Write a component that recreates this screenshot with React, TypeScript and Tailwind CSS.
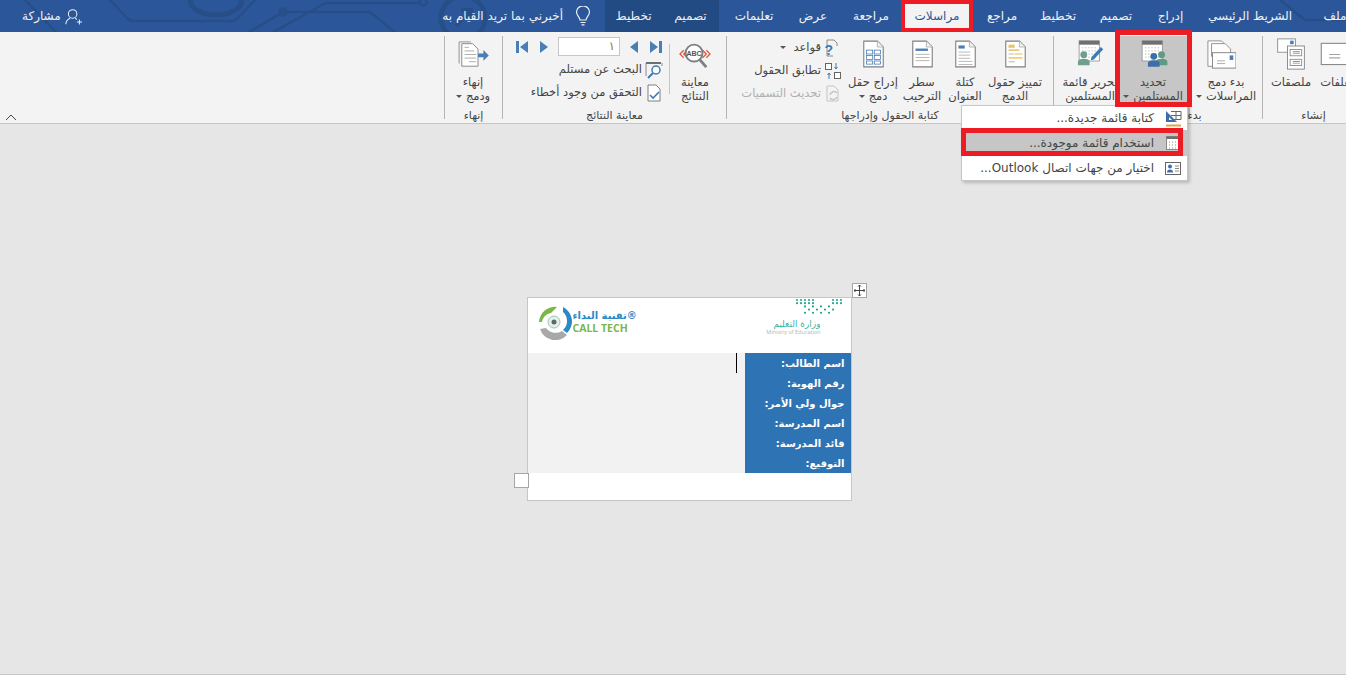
import type { ReactNode } from 'react';

const TABS = [
  { label: 'ملف', w: 'w-[50px] -mr-[14px]' },
  { label: 'الشريط الرئيسي', w: 'w-[120px]' },
  { label: 'إدراج', w: 'w-[39px]' },
  { label: 'تصميم', w: 'w-[70px]' },
  { label: 'تخطيط', w: 'w-[46px]' },
  { label: 'مراجع', w: 'w-[66px]' },
];

const TABS_AFTER = [
  { label: 'مراجعة', w: 'w-[68px]' },
  { label: 'عرض', w: 'w-[48px]' },
  { label: 'تعليمات', w: 'w-[70px]' },
];

const FIELDS = ['اسم الطالب:', 'رقم الهوية:', 'جوال ولي الأمر:', 'اسم المدرسة:', 'قائد المدرسة:', 'التوقيع:'];

function Page({ children }: { children?: ReactNode }) {
  return (
    <svg width="25" height="28" viewBox="0 0 32 36" fill="none">
      <path d="M3.5 1.5H21L28.5 9V34.5H3.5Z" fill="#fff" stroke="#7f7f7f" strokeWidth="1.4" />
      <path d="M21 1.5V9H28.5" fill="#f2f2f2" stroke="#a6a6a6" />
      {children}
    </svg>
  );
}

function Calendar({ children }: { children?: ReactNode }) {
  return (
    <svg width="30" height="28" viewBox="0 0 38 36" fill="none">
      <rect x="5" y="1" width="26" height="26" fill="#fff" stroke="#8a8a8a" />
      <rect x="5" y="1" width="26" height="5" fill="#6f6f6f" />
      <path d="M9 10h19M9 14h19M9 18h19M9 22h19" stroke="#9a9a9a" strokeDasharray="1.5 2.5" />
      {children}
    </svg>
  );
}

function Person({ x, y, color }: { x: number; y: number; color: string }) {
  return (
    <g fill={color}>
      <circle cx={x} cy={y} r="4.4" />
      <path d={`M${x - 7.5} ${y + 13.5}v-4.5c0-2.5 3-4 7.5-4s7.5 1.5 7.5 4v4.5z`} />
    </g>
  );
}

function Lines({ y, x1 = 8, x2 = 24, step = 4, n = 3, color = '#a6a6a6' }: { y: number; x1?: number; x2?: number; step?: number; n?: number; color?: string }) {
  return (
    <>
      {Array.from({ length: n }).map((_, i) => (
        <path key={i} d={`M${x1} ${y + i * step + 0.5}H${x2}`} stroke={color} />
      ))}
    </>
  );
}

function Big({ w, a, b, caret, icon }: { w: string; a: string; b: string; caret?: boolean; icon: ReactNode }) {
  return (
    <div className={`${w} flex flex-col items-center shrink-0`}>
      <div className="h-9 flex items-center justify-center">{icon}</div>
      <span className="mt-[3px] leading-[14px] whitespace-nowrap">{a}</span>
      <span className="leading-[14px] whitespace-nowrap flex items-center gap-1">
        {b}
        {caret && <i className="w-0 h-0 border-x-[3px] border-x-transparent border-t-[3px] border-t-[#555]" />}
      </span>
    </div>
  );
}

function Group({ label, className, inner = '', children }: { label: string; className: string; inner?: string; children: ReactNode }) {
  return (
    <div className={`${className} h-[83px] mt-1 border-l border-[#b5b5b5] flex flex-col shrink-0`}>
      <div className={`${inner} h-[70px] flex`}>{children}</div>
      <div className="mt-auto -mb-[4px] h-[13px] flex items-center justify-center text-[11px] whitespace-nowrap">{label}</div>
    </div>
  );
}

function Row({ icon, muted, children }: { icon: ReactNode; muted?: boolean; children: ReactNode }) {
  return (
    <div className={`h-[23px] flex items-center gap-[3px] whitespace-nowrap ${muted ? 'text-[#b0b0b0]' : ''}`}>
      <span className="w-[18px] h-[18px] flex items-center justify-center shrink-0">{icon}</span>
      {children}
    </div>
  );
}

function NavIcon({ d }: { d: string }) {
  return (
    <svg width="14" height="14" viewBox="0 0 14 14">
      <path d={d} fill="#4a7fb5" />
    </svg>
  );
}

function CircuitArt() {
  return (
    <svg className="absolute inset-0 pointer-events-none" width="1346" height="32" fill="none" stroke="#274e87" strokeWidth="2.5">
      <path d="M25 0 58 34M110 0l17 18q3 3 7 3h96q5 0 8-3l17-18" />
      <path d="M190 0a26 15 0 0 0 52 0" strokeWidth="5" />
      <path d="M246 34l37-22h87l27 22M283 12" />
      <circle cx="283" cy="12" r="3.5" />
      <path d="M270 34 320 6q4-3 9-3h91" />
      <circle cx="423" cy="2" r="3.5" />
      <circle cx="463" cy="18" r="22" strokeWidth="5" />
      <path d="M456 26 470 11M461 10h10v10" strokeWidth="4" />
      <path d="M1280 0l25 20h40" />
    </svg>
  );
}

export default function App() {
  return (
    <div dir="rtl" className="relative w-[1346px] h-[675px] overflow-hidden flex flex-col bg-[#e6e6e6] text-[#444] text-[11.5px] font-['DejaVu_Sans','Noto_Sans',sans-serif]">
      {/* title bar */}
      <div className="relative h-8 shrink-0 bg-[#2b579a] text-[#f1f1f1] text-[12px] flex">
        <CircuitArt />
        {TABS.map(t => (
          <div key={t.label} className={`${t.w} relative h-8 shrink-0 flex items-center justify-center whitespace-nowrap`}>{t.label}</div>
        ))}
        <div className="relative w-16 h-8 shrink-0 bg-[#f3f3f3] text-[#2b579a] flex items-center justify-center">مراسلات</div>
        {TABS_AFTER.map(t => (
          <div key={t.label} className={`${t.w} relative h-8 shrink-0 flex items-center justify-center whitespace-nowrap`}>{t.label}</div>
        ))}
        <div className="relative w-[114px] h-8 shrink-0 bg-[#224a83] flex">
          <span className="w-[57px] flex items-center justify-center">تصميم</span>
          <span className="w-[57px] flex items-center justify-center">تخطيط</span>
        </div>
        <div className="relative mr-[13px] w-[18px] flex items-center justify-center shrink-0">
          <svg width="16" height="20" viewBox="0 0 16 20" fill="none" stroke="#f1f1f1" strokeWidth="1.2">
            <path d="M5 14c0-3-3.500-4-3.500-8a6.500 6 0 0 1 13 0c0 4-3.500 5-3.500 8zM5.500 16.500h5M6.500 18.800h3" />
          </svg>
        </div>
        <div className="relative mr-[11px] flex items-center whitespace-nowrap">أخبرني بما تريد القيام به</div>
        <div className="relative mr-auto ml-[22px] flex items-center gap-[4px]">
          <svg className="mr-[-1px]" width="17" height="17" viewBox="0 0 20 20" fill="none" stroke="#f1f1f1" strokeWidth="1.2">
            <circle cx="9" cy="7" r="5" />
            <path d="M1 19c0-4 3-6 5-7M12 12l2 1.500M14 16.500h6M17 13.500v6" />
          </svg>
          <span>مشاركة</span>
        </div>
      </div>

      {/* ribbon */}
      <div className="relative h-[92px] shrink-0 bg-[#f3f3f3] border-b border-[#c6c6c6] flex">
        <Group label="إنشاء" className="w-[102px] -mr-[18px]">
          <Big w="w-[52px]" a="مغلفات" b="" icon={
            <svg width="36" height="29" viewBox="0 0 32 26" fill="none">
              <rect x="1" y="3" width="30" height="19" fill="#fff" stroke="#8a8a8a" />
              <rect x="24" y="5" width="5" height="5" fill="#4a7fb5" />
              <path d="M8 13h10M8 16h10" stroke="#a6a6a6" />
            </svg>
          } />
          <Big w="w-[42px]" a="ملصقات" b="" icon={
            <svg width="30" height="32" viewBox="0 0 32 36" fill="none">
              <rect x="1" y="1" width="20" height="15" fill="#fff" stroke="#8a8a8a" />
              <rect x="15" y="3" width="4" height="4" fill="#4a7fb5" />
              <rect x="12" y="9" width="19" height="26" fill="#fff" stroke="#7f7f7f" />
              <rect x="15" y="13" width="13" height="7" fill="#fff" stroke="#8a8a8a" />
              <rect x="15" y="24" width="13" height="7" fill="#fff" stroke="#8a8a8a" />
              <path d="M18 15.500h8" stroke="#4a7fb5" />
              <path d="M18 26.500h8" stroke="#4a7fb5" />
              <path d="M18 17.500h8M18 28.500h8" stroke="#a6a6a6" />
            </svg>
          } />
        </Group>
        <Group label="بدء دمج المراسلات" className="w-[209px]">
          <Big w="w-[72px]" a="بدء دمج" b="المراسلات" caret icon={
            <svg className="mr-[10px]" width="29" height="29" viewBox="0 1 32 32" fill="none">
              <path d="M1 2h15l3 3v25H1z" fill="#fff" stroke="#8a8a8a" />
              <path d="M5 5h15l6 6v8H5z" fill="#fff" stroke="#8a8a8a" />
              <rect x="6" y="15" width="26" height="17" fill="#fff" stroke="#7f7f7f" />
              <rect x="25" y="18" width="4" height="5" fill="#4a7fb5" />
              <path d="M11 24h9M11 27h9" stroke="#a6a6a6" />
            </svg>
          } />
          <div className="w-[74px] h-[83px] -mb-[13px] bg-[#c6c6c6] shrink-0">
            <Big w="w-[74px]" a="تحديد" b="المستلمين" caret icon={
              <Calendar>
                <Person x={30} y={19} color="#5f9a85" />
                <Person x={20} y={21} color="#3e6ea8" />
              </Calendar>
            } />
          </div>
          <Big w="w-[52px]" a="تحرير قائمة" b="المستلمين" icon={
            <Calendar>
              <Person x={11} y={19} color="#6f9f8d" />
              <path d="M21 22 33 9l3 3-12 13-4 1z" fill="#3e7ab5" />
            </Calendar>
          } />
        </Group>
        <Group label="كتابة الحقول وإدراجها" className="w-[327px]" inner="pr-[13px]">
          <Big w="w-[50px]" a="تمييز حقول" b="الدمج" icon={
            <Page>
              <rect x="7" y="6" width="8" height="4" fill="#e8c36a" />
              <path d="M7 13h14" stroke="#e8c36a" strokeWidth="2" />
              <path d="M7 18h7" stroke="#a6a6a6" />
              <path d="M15 18h10M7 23h18" stroke="#f2b84b" strokeWidth="1.500" />
              <path d="M7 28h8" stroke="#a6a6a6" />
            </Page>
          } />
          <Big w="w-[50px]" a="كتلة" b="العنوان" icon={
            <Page>
              <rect x="7" y="7" width="8" height="4" fill="#4a7fb5" />
              <Lines y={15} x1={7} x2={22} />
              <Lines y={27} x1={7} x2={25} n={2} />
            </Page>
          } />
          <Big w="w-[36px]" a="سطر" b="الترحيب" icon={
            <Page>
              <rect x="7" y="11" width="16" height="3" fill="#4a7fb5" />
              <Lines y={18} x1={7} x2={25} n={3} />
            </Page>
          } />
          <Big w="w-[62px]" a="إدراج حقل" b="دمج" caret icon={
            <Page>
              <g stroke="#3e7ab5" fill="#fff">
                <rect x="7" y="13" width="8" height="5" />
                <rect x="17" y="13" width="8" height="5" />
                <rect x="7" y="20" width="8" height="5" />
                <rect x="17" y="20" width="8" height="5" />
                <rect x="7" y="27" width="8" height="4" />
                <rect x="17" y="27" width="8" height="4" />
              </g>
            </Page>
          } />
          <div className="flex flex-col">
            <Row icon={
              <svg width="18" height="18" viewBox="0 0 18 18" fill="none">
                <path d="M3 1h7l3 3v3M3 1v16h6" stroke="#8a8a8a" />
                <text x="9" y="16" fontSize="14" fontWeight="700" fill="#3e7ab5" fontFamily="Liberation Sans">?</text>
              </svg>
            }>
              <span>قواعد</span>
              <i className="mr-1 w-0 h-0 border-x-[3px] border-x-transparent border-t-[3px] border-t-[#555]" />
            </Row>
            <Row icon={
              <svg width="18" height="18" viewBox="0 0 18 18" fill="none">
                <rect x="1.500" y="1.500" width="6" height="6" fill="#fff" stroke="#666" />
                <rect x="10.500" y="10.500" width="6" height="6" fill="#fff" stroke="#666" />
                <path d="M12 1v6M10.500 5l1.500 2 1.500-2M5 11v6M3.500 13 5 11l1.500 2" stroke="#3e7ab5" />
              </svg>
            }>تطابق الحقول</Row>
            <Row muted icon={
              <svg width="18" height="18" viewBox="0 0 18 18" fill="none" stroke="#c4c4c4">
                <path d="M3 1h7l4 4v11H3z" />
                <path d="M6 10a4 4 0 0 1 7-2M13 12a4 4 0 0 1-7 1" strokeWidth="1.500" />
              </svg>
            }>تحديث التسميات</Row>
          </div>
        </Group>
        <Group label="معاينة النتائج" className="w-[224px]" inner="pr-[6px]">
          <Big w="w-[50px]" a="معاينة" b="النتائج" icon={
            <svg width="32" height="32" viewBox="0 -3 34 34" fill="none">
              <path d="M5 10 1 14l4 4M9 10l-4 4 4 4M25 10l4 4-4 4M29 10l4 4-4 4" stroke="#d9583b" strokeWidth="1.300" />
              <circle cx="16" cy="13" r="9" fill="#fff" stroke="#7f7f7f" strokeWidth="2" />
              <path d="M22 20l7 8" stroke="#7f7f7f" strokeWidth="3" />
              <text x="16" y="16" textAnchor="middle" fontSize="7.500" fontWeight="700" fill="#555" fontFamily="Liberation Sans">ABC</text>
            </svg>
          } />
          <div className="w-[7px] my-[8px] h-[50px] border-r border-[#c4c4c4] shrink-0" />
          <div className="-mt-px flex flex-col">
            <div className="h-[23px] flex items-center">
              <NavIcon d="M13 1h-3v12h3zM9 7 1 1v12z" />
              <span className="w-[9px]" />
              <NavIcon d="M4 7l8-6v12z" />
              <span className="w-[6px]" />
              <div className="w-[62px] h-[19px] bg-white border border-[#c6c6c6] px-1 flex items-center text-[#a06b2a]">١</div>
              <span className="w-[6px]" />
              <NavIcon d="M10 7 2 1v12z" />
              <span className="w-[9px]" />
              <NavIcon d="M1 1h3v12H1zM5 7l8-6v12z" />
            </div>
            <Row icon={
              <svg width="18" height="18" viewBox="0 0 18 18" fill="none">
                <path d="M1 2h15" stroke="#6f6f6f" strokeWidth="2" />
                <path d="M1 2v13M17 2v3" stroke="#8a8a8a" />
                <circle cx="11" cy="9" r="4" fill="#fff" stroke="#3e7ab5" strokeWidth="1.500" />
                <path d="M8 12l-5 5" stroke="#3e7ab5" strokeWidth="2" />
              </svg>
            }>البحث عن مستلم</Row>
            <Row icon={
              <svg width="18" height="18" viewBox="0 0 18 18" fill="none">
                <path d="M3 1h8l4 4v12H3z" fill="#fff" stroke="#7f7f7f" />
                <path d="M5 11l3 3 6-6" stroke="#3e7ab5" strokeWidth="1.600" />
              </svg>
            }>التحقق من وجود أخطاء</Row>
          </div>
        </Group>
        <Group label="إنهاء" className="w-[58px]">
          <Big w="w-[58px]" a="إنهاء" b="ودمج" caret icon={
            <svg width="31" height="27" viewBox="0 0 34 30" fill="none">
              <path d="M1 1h13M1 1v24" stroke="#8a8a8a" />
              <path d="M4 3h12l6 6v19H4z" fill="#fff" stroke="#7f7f7f" />
              <path d="M7 7h5M7 11h11M7 15h13M7 19h13M12 23h8" stroke="#a6a6a6" />
              <path d="M22 14h6v-4l6 6-6 6v-4h-6z" fill="#4a7fb5" />
            </svg>
          } />
        </Group>
        <div className="flex-1 flex items-end justify-end pl-[5px] pb-[2px]">
          <svg width="12" height="7" viewBox="0 0 12 7" fill="none" stroke="#444"><path d="M1 6l5-5 5 5" /></svg>
        </div>
      </div>

      {/* document area */}
      <div className="flex-1 flex flex-col items-center border-b border-[#c6c6c6]">
        <div className="relative mt-[173px] w-[325px] h-[204px] border border-[#c6c6c6] bg-white ml-[32px]">
          <div dir="ltr" className="h-[55px] flex items-start justify-between pr-[6px] pl-[9px]">
            <div className="mt-[6px] flex items-center">
              <svg width="36" height="36" viewBox="0 0 36 36" fill="none">
                <path d="M2 18a16 16 0 0 1 18-15l-6 6a11 11 0 0 0-9 9z" fill="#7ab648" />
                <path d="M26 3a16 16 0 0 1 4 26l-4-3a12 12 0 0 0 0-18z" fill="#2b8ac6" />
                <path d="M30 31a16 16 0 0 1-27-6l6-1a12 12 0 0 0 16 3z" fill="#a8a8a8" />
                <circle cx="17" cy="18" r="6" fill="#e3f0ea" stroke="#9cc7b4" />
                <circle cx="17" cy="18" r="2.500" fill="#666" />
              </svg>
              <div dir="rtl" className="flex flex-col items-end font-bold leading-[13px]">
                <span className="text-[#2b8ac6] text-[10px]">®تقنية النداء</span>
                <span className="self-end text-[#7ab648] text-[10.5px] font-['Open_Sans',sans-serif]">CALL TECH</span>
              </div>
            </div>
            <div className="flex flex-col items-center">
              <svg width="50" height="17" viewBox="0 0 50 17" className="self-end">
                <g fill="#2aa58f">
                  {Array.from({ length: 5 }).map((_, r) =>
                    Array.from({ length: 12 }).map((_, c) =>
                      (r < 2 && (c < 5 || c > 8)) || (r >= 2 && c > 1 && c < 10 && (r + c) % 2 === 0) ? (
                        <circle key={`${r}-${c}`} cx={c * 4 + 2} cy={r * 3.200 + 2} r="1.100" />
                      ) : null
                    )
                  )}
                </g>
              </svg>
              <span className="mt-[4px] mr-6 self-end text-[#3fb3a0] text-[9px] leading-[10px]">وزارة التعليم</span>
              <span className="mr-6 self-end text-[#b5b5b5] text-[5.5px] leading-[6px] font-['Open_Sans',sans-serif]">Ministry of Education</span>
            </div>
          </div>
          <div className="flex h-[120px]">
            <div className="w-[106px] bg-[#2e74b5] flex flex-col text-white font-bold text-[10px] pr-[6px]">
              {FIELDS.map(f => (
                <div key={f} className="h-5 pt-[1px] flex items-center whitespace-nowrap">{f}</div>
              ))}
            </div>
            <div className="flex-1 bg-[#f2f2f2] pr-[8px]">
              <div className="w-px h-5 bg-black" />
            </div>
          </div>
          {/* table handles */}
          <div className="absolute -top-[15px] -right-[16px] w-[15px] h-[15px] bg-white border border-[#a6a6a6] flex items-center justify-center">
            <svg width="11" height="11" viewBox="0 0 11 11" fill="none" stroke="#444"><path d="M5.500 0v11M0 5.500h11M4 1.500 5.500 0 7 1.500M4 9.500 5.500 11 7 9.500M1.500 4 0 5.500 1.500 7M9.500 4 11 5.500 9.500 7" /></svg>
          </div>
          <div className="absolute top-[175px] -left-[14px] w-[15px] h-[15px] bg-white border border-[#a6a6a6]" />
        </div>
      </div>

      {/* recipients menu */}
      <div className="absolute left-[961px] top-[105px] w-[227px] h-[76px] bg-white border border-[#c6c6c6] shadow-[2px_2px_3px_rgba(0,0,0,0.2)] text-[#444] text-[12px]">
        <div className="h-[24px] flex items-center">
          <span className="w-[26px] flex justify-center mr-[1px]">
            <svg width="17" height="17" viewBox="0 0 17 17" fill="none">
              <path d="M6 1.500h10v8H6M6 5.500h10M11 1.500v8" stroke="#666" />
              <path d="M1 1 12 12H1z" fill="#3e6ea8" />
              <path d="M4 7l3 3H4z" fill="#fff" />
              <path d="M1 15.500h15" stroke="#e8a04a" strokeWidth="2" />
            </svg>
          </span>
          <span className="mr-[6px]">كتابة قائمة جديدة...</span>
        </div>
        <div className="h-[26px] bg-[#c6c6c6] flex items-center">
          <span className="w-[26px] flex justify-center mr-[1px]">
            <svg width="14" height="14" viewBox="0 0 14 14" fill="none">
              <rect x="0.500" y="0.500" width="13" height="13" fill="#fff" stroke="#8a8a8a" />
              <rect x="0.500" y="0.500" width="13" height="2.500" fill="#6f6f6f" />
              <path d="M3 6h9M3 9h9M3 12h9" stroke="#8a8a8a" strokeDasharray="1 2" />
            </svg>
          </span>
          <span className="mr-[6px]">استخدام قائمة موجودة...</span>
        </div>
        <div className="h-[24px] flex items-center">
          <span className="w-[26px] flex justify-center mr-[1px]">
            <svg width="16" height="13" viewBox="0 0 16 13" fill="none">
              <rect x="0.500" y="0.500" width="15" height="12" fill="#fff" stroke="#666" />
              <circle cx="5" cy="4.500" r="2" fill="#3e6ea8" />
              <path d="M2 10.500c0-2 1-3 3-3s3 1 3 3z" fill="#3e6ea8" />
              <path d="M10 4h4M10 6.500h4M10 9h4" stroke="#888" />
            </svg>
          </span>
          <span className="mr-[6px]">اختيار من جهات اتصال Outlook...</span>
        </div>
      </div>

      {/* red annotation boxes */}
      <div className="absolute left-[901px] top-0 w-[72px] h-[32px] border-4 border-[#ed1c24]" />
      <div className="absolute left-[1115px] top-[30px] w-[77px] h-[77px] border-[5px] border-[#ed1c24]" />
      <div className="absolute left-[961px] top-[128px] w-[222px] h-[28px] border-[5px] border-[#ed1c24]" />
    </div>
  );
}
